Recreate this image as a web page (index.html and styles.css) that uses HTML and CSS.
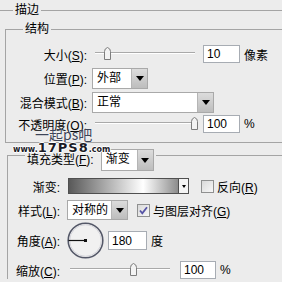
FILE: index.html
```html
<!DOCTYPE html>
<html lang="zh-CN">
<head>
    <meta charset="UTF-8">
    <title>描边</title>
    <link rel="stylesheet" href="styles.css">
</head>
<body>
<fieldset class="outer">
    <legend>描边</legend>

    <!-- 结构 -->
    <fieldset class="struct">
        <legend>结构</legend>
        <div class="row row-size">
            <span class="lbl">大小(<u>S</u>):</span>
            <div class="slider">
                <svg class="thumb" style="left:8px" width="9" height="13" viewBox="0 0 9 13"><path d="M1.5 4.5 Q1.5 1.5 4.5 0.5 Q7.5 1.5 7.5 4.5 V12.5 H1.5 Z" fill="#f3f3f3" stroke="#7d7d7d"/></svg>
            </div>
            <input class="num" value="10" readonly>
            <span class="unit">像素</span>
        </div>
        <div class="row row-pos">
            <span class="lbl">位置(<u>P</u>):</span>
            <div class="select w-pos"><span class="val">外部</span><span class="drop"></span></div>
        </div>
        <div class="row row-blend">
            <span class="lbl">混合模式(<u>B</u>):</span>
            <div class="select w-blend"><span class="val">正常</span><span class="drop"></span></div>
        </div>
        <div class="row row-opacity">
            <span class="lbl">不透明度(<u>O</u>):</span>
            <div class="slider">
                <svg class="thumb" style="left:95px" width="9" height="13" viewBox="0 0 9 13"><path d="M1.5 4.5 Q1.5 1.5 4.5 0.5 Q7.5 1.5 7.5 4.5 V12.5 H1.5 Z" fill="#f3f3f3" stroke="#7d7d7d"/></svg>
            </div>
            <input class="num" value="100" readonly>
            <span class="unit">%</span>
        </div>
    </fieldset>

    <!-- 填充 -->
    <fieldset class="fill">
        <legend>
            <span class="fill-lbl">填充类型(<u>F</u>):</span>
            <div class="select w-fill"><span class="val">渐变</span><span class="drop"></span></div>
        </legend>
        <div class="row row-grad">
            <span class="lbl2">渐变:</span>
            <div class="grad"></div>
            <div class="grad-btn"><span class="tiny"></span></div>
            <span class="check"></span>
            <span class="check-lbl">反向(<u>R</u>)</span>
        </div>
        <div class="row row-style">
            <span class="lbl2">样式(<u>L</u>):</span>
            <div class="select w-style"><span class="val">对称的</span><span class="drop"></span></div>
            <span class="check on">
                <svg width="11" height="11" viewBox="0 0 11 11"><path d="M2 5.5 L4.3 8.3 L9 2.2" fill="none" stroke="#5654a6" stroke-width="1.8"/></svg>
            </span>
            <span class="check-lbl">与图层对齐(<u>G</u>)</span>
        </div>
        <div class="row row-angle">
            <span class="lbl2">角度(<u>A</u>):</span>
            <svg class="dial" width="37" height="37" viewBox="0 0 37 37">
                <circle cx="18.5" cy="18.5" r="17.3" fill="#f1f1f1" stroke="#545868" stroke-width="1.6"/>
                <circle cx="18.5" cy="18.5" r="15.8" fill="none" stroke="#d6d6dc" stroke-width="1"/>
                <line x1="1.5" y1="18.5" x2="18.5" y2="18.5" stroke="#111" stroke-width="1.2"/>
                <rect x="17" y="17" width="3" height="3" fill="#111"/>
            </svg>
            <input class="num num-angle" value="180" readonly>
            <span class="unit">度</span>
        </div>
        <div class="row row-scale">
            <span class="lbl2">缩放(<u>C</u>):</span>
            <div class="slider">
                <svg class="thumb" style="left:59px" width="9" height="13" viewBox="0 0 9 13"><path d="M1.5 4.5 Q1.5 1.5 4.5 0.5 Q7.5 1.5 7.5 4.5 V12.5 H1.5 Z" fill="#f3f3f3" stroke="#7d7d7d"/></svg>
            </div>
            <input class="num" value="100" readonly>
            <span class="unit">%</span>
        </div>
    </fieldset>
</fieldset>

<!-- watermark -->
<div class="wm-cn">一起ps吧</div>
<div class="wm-url"><span class="small">www.</span>17PS8<span class="small">.com</span></div>
</body>
</html>
```

FILE: styles.css
```css
body { margin: 0; width: 282px; height: 282px; overflow: hidden; background: #ececec; color: #000; font: 12px "Liberation Sans", "Noto Sans CJK SC", sans-serif; position: relative; }
u { text-underline-offset: 1px; }

fieldset { margin: 0; padding: 0; border: none; min-width: 0; }
legend { padding: 0 2px; line-height: 14px; }

.outer { margin-top: 3px; border-top: 1px solid #a4a4a4; }
.outer > legend { margin-left: 13px; }

.struct { margin: 5px 0 0 5px; border: 1px solid #a4a4a4; border-right: none; padding-bottom: 9px; }
.struct > legend { margin-left: 17px; }

.row { display: flex; align-items: center; }
.lbl { width: 81px; text-align: right; white-space: nowrap; }
.lbl2 { width: 52px; text-align: right; white-space: nowrap; }

.row-size { height: 18px; margin-top: 9px; }
.row-pos { height: 23px; margin-top: 4px; }
.row-blend { height: 21px; margin-top: 2px; }
.row-opacity { height: 18px; margin-top: 2px; }

.slider { position: relative; width: 100px; height: 18px; margin-left: 8px; }
.slider::before { content: ""; position: absolute; left: 0; right: 0; top: 7px; border-top: 1px solid #a9a9a9; border-bottom: 1px solid #fff; }
.thumb { position: absolute; top: 2px; }

.num { box-sizing: border-box; width: 37px; height: 18px; margin: 0 0 0 8px; padding: 0 3px; border: 1px solid #a7acb3; background: #fff; font: 12px "Liberation Sans", sans-serif; color: #000; outline: none; }
.unit { margin-left: 4px; }

.select { box-sizing: border-box; display: flex; height: 21px; margin-left: 5px; border: 1px solid #a9a9a9; background: #fff; }
.select .val { flex: 1; padding-left: 4px; line-height: 19px; white-space: nowrap; }
.select .drop { width: 15px; border-left: 1px solid #b5b5b5; background: linear-gradient(#dcdcdc, #bdbdbd); display: flex; align-items: center; justify-content: center; }
.select .drop::after { content: ""; border-left: 4px solid transparent; border-right: 4px solid transparent; border-top: 5px solid #000; }
.w-pos { width: 56px; }
.w-blend { width: 122px; }
.w-fill { width: 53px; height: 22px; margin-left: 7px; }
.w-style { width: 61px; height: 20px; margin-left: 7px; }
.w-style .val { line-height: 18px; }

.fill { margin: 6px 0 0 7px; border-left: 1px solid #a4a4a4; border-top: 1px solid #a4a4a4; }
.fill > legend { margin-left: 17px; display: flex; height: 12px; align-items: flex-start; }
.fill-lbl { line-height: 22px; white-space: nowrap; }

.row-grad { height: 16px; margin-top: 17px; }
.grad { box-sizing: border-box; width: 111px; height: 16px; margin-left: 8px; border: 1px solid #4f4f4f; background: linear-gradient(to right, #595959, #ffffff 68%, #8c8c8c); }
.grad-btn { box-sizing: border-box; width: 10px; height: 16px; border: 1px solid #4f4f4f; border-left: none; background: #f4f4f4; display: flex; align-items: center; justify-content: center; }
.tiny { border-left: 2px solid transparent; border-right: 2px solid transparent; border-top: 3px solid #000; }

.check { box-sizing: border-box; width: 13px; height: 13px; border: 1px solid #8f9090; background: linear-gradient(135deg, #d9d9d9, #f7f7f7); display: flex; align-items: center; justify-content: center; }
.row-grad .check { margin-left: 12px; }
.row-style .check { margin-left: 9px; }
.check-lbl { margin-left: 3px; white-space: nowrap; }

.row-style { height: 20px; margin-top: 6px; }
.row-angle { height: 37px; margin-top: 2px; }
.dial { margin-left: 7px; }
.num-angle { width: 39px; height: 19px; margin-left: 4px; }
.row-scale { height: 18px; margin-top: 2px; }
.row-scale .slider { margin-left: 10px; }
.row-scale .num { margin-left: 10px; width: 36px; }

.wm-cn { position: absolute; left: 35px; top: 124px; font: 14px "Noto Sans CJK SC", sans-serif; color: #3d4457; text-shadow: 0 0 1px #fff; white-space: nowrap; }
.wm-url { position: absolute; left: 13px; top: 140px; font: bold 13px "DejaVu Sans", sans-serif; color: #1b1b26; letter-spacing: 1px; text-shadow: 1px 0 0 #fff, -1px 0 0 #fff, 0 1px 0 #fff, 0 -1px 0 #fff; white-space: nowrap; }
.wm-url .small { font-size: 8px; letter-spacing: 0; }
```
